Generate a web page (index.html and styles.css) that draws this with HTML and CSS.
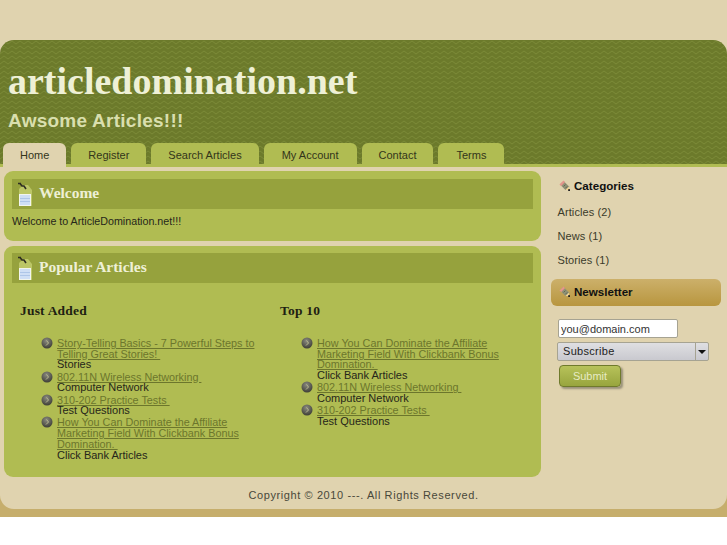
FILE: index.html
```html
<!DOCTYPE html>
<html lang="en">

<head>
    <meta charset="UTF-8">
    <meta name="viewport" content="width=device-width, initial-scale=1.0">
    <title>articledomination.net</title>
    <link rel="stylesheet" href="styles.css">
</head>

<body>
    <svg class="icon-defs" width="0" height="0">
        <symbol id="note" viewBox="0 0 16 24">
            <path d="M2 7 L6 3 L11 3 L15 8 V24 H2 Z" fill="#bcc666" />
            <rect x="2" y="12" width="12" height="12" fill="#f2f5ee" />
            <rect x="3" y="13" width="10" height="10" fill="#cfdff5" />
            <path d="M3 16.5H13M3 19.5H13" stroke="#aec6e8" />
            <path d="M1 1.5 L4 1.5 M3 1.5 L5 4 L7 4 L9 7" fill="none" stroke="#2f2f22" stroke-width="1.6" />
        </symbol>
        <symbol id="pencil" viewBox="0 0 12 12">
            <path d="M1 5 L5 1 L11 7 L11 11 L7 11 Z" fill="#8f9276" />
            <path d="M3 5 L5 3 M5 7 L7 5 M7 9 L9 7" stroke="#5f6250" />
            <path d="M0.5 5 L5 0.5 L6.5 2.5 L2.5 6.5 Z" fill="#e4958c" />
            <path d="M7 11 L11 7 L11 11 Z" fill="#f4d592" />
            <rect x="10" y="10" width="2" height="2" fill="#222" />
        </symbol>
        <symbol id="bullet" viewBox="0 0 12 12">
            <defs>
                <radialGradient id="ball" cx="0.45" cy="0.3" r="0.8">
                    <stop offset="0" stop-color="#8a8a80" />
                    <stop offset="1" stop-color="#33332c" />
                </radialGradient>
            </defs>
            <circle cx="6" cy="6" r="5.5" fill="url(#ball)" />
            <path d="M5.5 3.5 L7.5 6 L5 8.5" fill="none" stroke="#b9b98f" />
        </symbol>
    </svg>

    <div class="page">
        <div class="header">
            <h1>articledomination.net</h1>
            <p class="tagline">Awsome Articles!!!</p>
            <ul class="nav">
                <li class="active"><a href="#">Home</a></li>
                <li><a href="#">Register</a></li>
                <li><a href="#">Search Articles</a></li>
                <li class="wide"><a href="#">My Account</a></li>
                <li><a href="#">Contact</a></li>
                <li class="wide"><a href="#">Terms</a></li>
            </ul>
        </div>

        <div class="main">
            <div class="content">
                <div class="panel panel-welcome">
                    <h2 class="panel-title"><svg class="note-icon"><use href="#note" /></svg>Welcome</h2>
                    <p class="welcome-text">Welcome to ArticleDomination.net!!!</p>
                </div>

                <div class="panel panel-popular">
                    <h2 class="panel-title"><svg class="note-icon"><use href="#note" /></svg>Popular Articles</h2>
                    <div class="columns">
                        <div class="column">
                            <h3>Just Added</h3>
                            <ul class="articles">
                                <li><svg class="bullet"><use href="#bullet" /></svg><a href="#">Story-Telling Basics - 7 Powerful Steps to Telling Great Stories!&nbsp;</a><br>Stories</li>
                                <li><svg class="bullet"><use href="#bullet" /></svg><a href="#">802.11N Wireless Networking&nbsp;</a><br>Computer Network</li>
                                <li><svg class="bullet"><use href="#bullet" /></svg><a href="#">310-202 Practice Tests&nbsp;</a><br>Test Questions</li>
                                <li><svg class="bullet"><use href="#bullet" /></svg><a href="#">How You Can Dominate the Affiliate Marketing Field With Clickbank Bonus Domination.&nbsp;</a><br>Click Bank Articles</li>
                            </ul>
                        </div>
                        <div class="column">
                            <h3>Top 10</h3>
                            <ul class="articles">
                                <li><svg class="bullet"><use href="#bullet" /></svg><a href="#">How You Can Dominate the Affiliate Marketing Field With Clickbank Bonus Domination.&nbsp;</a><br>Click Bank Articles</li>
                                <li><svg class="bullet"><use href="#bullet" /></svg><a href="#">802.11N Wireless Networking&nbsp;</a><br>Computer Network</li>
                                <li><svg class="bullet"><use href="#bullet" /></svg><a href="#">310-202 Practice Tests&nbsp;</a><br>Test Questions</li>
                            </ul>
                        </div>
                    </div>
                </div>
            </div>

            <div class="sidebar">
                <h4 class="side-title"><svg class="pencil"><use href="#pencil" /></svg>Categories</h4>
                <ul class="categories">
                    <li>Articles (2)</li>
                    <li>News (1)</li>
                    <li>Stories (1)</li>
                </ul>
                <h4 class="side-title side-title-bar"><svg class="pencil"><use href="#pencil" /></svg>Newsletter</h4>
                <form class="newsletter">
                    <input type="text" class="email" value="you@domain.com">
                    <div class="select">
                        <span class="select-value">Subscribe</span>
                        <span class="select-arrow"></span>
                    </div>
                    <button type="button" class="submit">Submit</button>
                </form>
            </div>
        </div>

        <div class="bottom">
            <div class="footer">Copyright © 2010 ---. All Rights Reserved.</div>
        </div>
    </div>
</body>

</html>
```

FILE: styles.css
```css
* {
    margin: 0;
    padding: 0;
    box-sizing: border-box;
}

body {
    font-family: 'Liberation Sans', Arial, sans-serif;
    font-size: 11px;
    background: #fff;
    color: #2b2b1c;
}

ul {
    list-style: none;
}

.icon-defs {
    display: block;
    height: 0;
}

.page {
    width: 727px;
    padding-top: 40px;
    background: #e0d3af;
}

/* Header */
.header {
    height: 127px;
    padding-top: 20px;
    background-color: #6c7a2b;
    background-image: url("data:image/svg+xml,%3Csvg xmlns='http://www.w3.org/2000/svg' width='8' height='5'%3E%3Cpath d='M0 4 L4 1 L8 4' fill='none' stroke='%237b8a38' stroke-width='1'/%3E%3C/svg%3E");
    border-top-left-radius: 14px;
    border-top-right-radius: 14px;
    border-bottom: 3px solid #b0bc52;
}

.header h1 {
    margin-left: 8px;
    font-family: 'Liberation Serif', 'Times New Roman', serif;
    font-size: 38px;
    line-height: 42px;
    color: #eef0d6;
}

.tagline {
    margin: 7px 0 0 8px;
    font-size: 19px;
    line-height: 24px;
    font-weight: bold;
    letter-spacing: 0.25px;
    color: #d9dfae;
}

.nav {
    display: flex;
    gap: 5px;
    margin: 10px 0 0 3px;
}

.nav li {
    height: 21px;
    background: #b0bc52;
    border-radius: 6px 6px 0 0;
}

.nav li.active {
    height: 24px;
    background: #e0d3af;
}

.nav a {
    display: block;
    padding: 0 17px;
    line-height: 24px;
    color: #33351a;
    text-decoration: none;
}

.nav li.wide a {
    padding: 0 18px;
}

/* Main area */
.main {
    display: flex;
    height: 313px;
    padding: 4px 0 0 4px;
}

.content {
    width: 537px;
}

.panel {
    background: #b0bc52;
    border-radius: 9px;
    padding: 8px;
}

.panel-welcome {
    height: 70px;
    margin-bottom: 5px;
}

.panel-popular {
    height: 231px;
    padding-top: 7px;
}

.panel-title {
    display: flex;
    align-items: center;
    height: 30px;
    padding: 0 0 2px 5px;
    background: #96a23d;
    font-family: 'Liberation Serif', 'Times New Roman', serif;
    font-size: 15.5px;
    color: #eef0d6;
}

.note-icon {
    width: 16px;
    height: 24px;
    margin: 2px 6px 0 0;
}

.welcome-text {
    margin-top: 6px;
    font-size: 10.7px;
    line-height: 13px;
    color: #26261a;
}

.columns {
    display: flex;
}

.column {
    width: 260px;
    padding: 20px 0 0 8px;
}

.column h3 {
    font-family: 'Liberation Serif', 'Times New Roman', serif;
    font-size: 13.5px;
    line-height: 16px;
    letter-spacing: 0.2px;
    color: #1f1f12;
}

.articles {
    margin-top: 19px;
    padding-left: 37px;
}

.articles li {
    position: relative;
    width: 204px;
    margin-bottom: 1.5px;
    line-height: 10.7px;
    color: #26261a;
}

.articles a {
    font-size: 10.8px;
    color: #6c762c;
}

.bullet {
    position: absolute;
    left: -16px;
    top: -1px;
    width: 12px;
    height: 12px;
}

/* Sidebar */
.sidebar {
    width: 186px;
    padding: 0 6px 0 10px;
}

.side-title {
    display: flex;
    align-items: center;
    height: 27px;
    padding-left: 8px;
    font-size: 11.6px;
    color: #111;
}

.sidebar > .side-title:first-child {
    margin-top: 1px;
}

.side-title-bar {
    margin-top: 7px;
    padding-bottom: 2px;
    background: linear-gradient(#ccb06a, #b8963f);
    border-radius: 6px;
}

.pencil {
    width: 11px;
    height: 11px;
    margin-right: 4px;
}

.categories {
    padding: 1px 0 0 6.5px;
}

.categories li {
    height: 24px;
    line-height: 24px;
    letter-spacing: 0.1px;
    color: #3b3b2a;
}

.newsletter {
    padding: 13px 0 0 6px;
}

.email {
    display: block;
    width: 120px;
    height: 19px;
    margin-left: 1px;
    padding: 0 2px;
    border: 1px solid #a6a392;
    border-radius: 2px;
    background: #fff;
    font-family: 'Liberation Sans', Arial, sans-serif;
    font-size: 11px;
    color: #333;
}

.select {
    display: flex;
    width: 152px;
    height: 19px;
    margin-top: 4px;
    border: 1px solid #a6a392;
    border-radius: 2px;
    background: linear-gradient(#dfdfe2, #c9c9cf);
    line-height: 17px;
}

.select-value {
    flex: 1;
    padding-left: 5px;
    letter-spacing: 0.3px;
    color: #222;
}

.select-arrow {
    position: relative;
    width: 13px;
    border-left: 1px solid #a6a392;
}

.select-arrow::after {
    content: "";
    position: absolute;
    left: 2px;
    top: 7px;
    border: 4px solid transparent;
    border-top-color: #111;
}

.submit {
    display: block;
    width: 62px;
    height: 22px;
    margin: 4px 0 0 2px;
    border: 1px solid #6f7a2c;
    border-radius: 4px;
    background: linear-gradient(#b7c25a, #98a53e);
    box-shadow: 2px 2px 2px #9a927a;
    font-family: 'Liberation Sans', Arial, sans-serif;
    font-size: 11px;
    color: #e7ebc4;
}

/* Footer */
.bottom {
    height: 37px;
    background: #c6ae6c;
}

.footer {
    height: 29px;
    padding-top: 9px;
    background: #e0d3af;
    border-radius: 0 0 14px 14px;
    text-align: center;
    line-height: 13px;
    letter-spacing: 0.6px;
    color: #48483a;
}
```
